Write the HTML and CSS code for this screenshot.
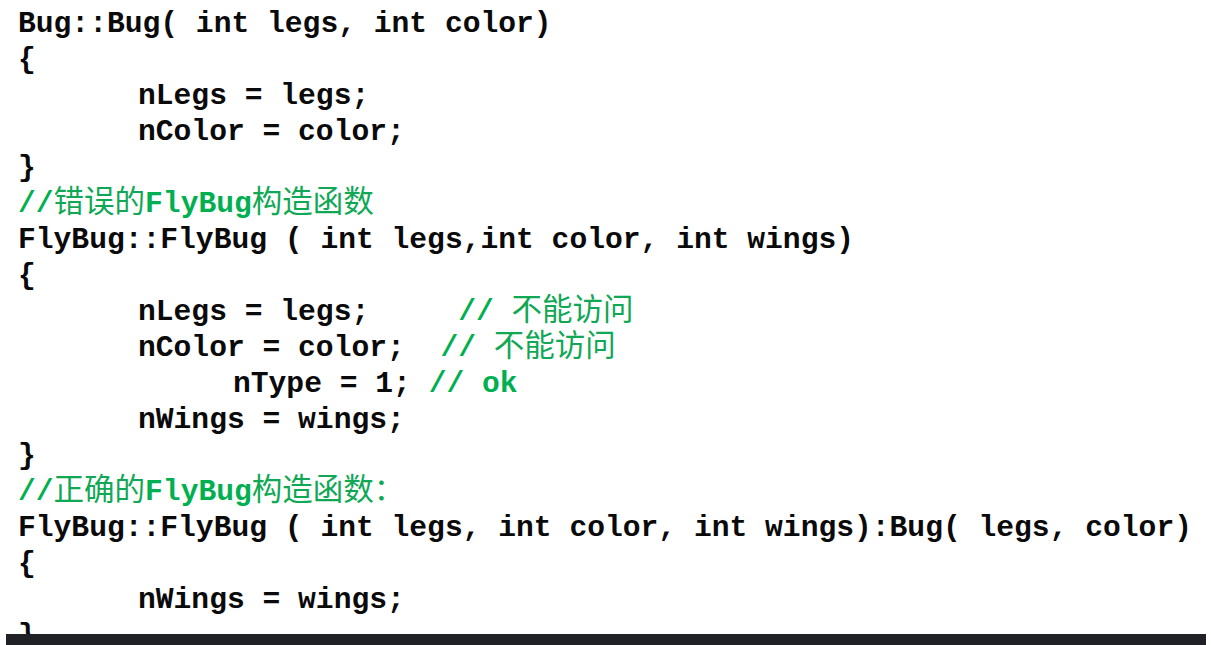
FILE: index.html
```html
<!DOCTYPE html>
<html lang="zh-CN">
<head>
    <meta charset="UTF-8">
    <meta name="viewport" content="width=device-width, initial-scale=1.0">
    <title>FlyBug 构造函数</title>
    <link rel="stylesheet" href="styles.css">
</head>
<body>

<div class="code">
    <div class="line">Bug::Bug( int legs, int color)</div>
    <div class="line">{</div>
    <div class="line in1">nLegs = legs;</div>
    <div class="line in1">nColor = color;</div>
    <div class="line">}</div>
    <div class="line comment">//<span class="cjk">错误的</span>FlyBug<span class="cjk">构造函数</span></div>
    <div class="line">FlyBug::FlyBug ( int legs,int color, int wings)</div>
    <div class="line">{</div>
    <div class="line in1">nLegs = legs;     <span class="comment">// <span class="cjk">不能访问</span></span></div>
    <div class="line in1">nColor = color;  <span class="comment">// <span class="cjk">不能访问</span></span></div>
    <div class="line in2">nType = 1; <span class="comment">// ok</span></div>
    <div class="line in1">nWings = wings;</div>
    <div class="line">}</div>
    <div class="line comment">//<span class="cjk">正确的</span>FlyBug<span class="cjk">构造函数：</span></div>
    <div class="line">FlyBug::FlyBug ( int legs, int color, int wings):Bug( legs, color)</div>
    <div class="line">{</div>
    <div class="line in1">nWings = wings;</div>
    <div class="line">}</div>
</div>

<div class="bottom-bar"></div>

</body>
</html>
```

FILE: styles.css
```css
body {
    margin: 0;
    background-color: #ffffff;
    overflow: hidden;
}
.code {
    padding: 6px 0 0 18px;
    font-family: "Liberation Mono", "Courier New", monospace;
    font-size: 29.65px;
    font-weight: bold;
    color: #0a0a0a;
}
.line {
    height: 36px;
    line-height: 36px;
    white-space: pre;
}
.in1 {
    padding-left: 120px;
}
.in2 {
    padding-left: 215px;
}
.comment {
    color: #00b050;
}
.cjk {
    font-family: "Noto Sans CJK SC", sans-serif;
    font-weight: normal;
    font-size: 30.5px;
    line-height: 0;
    color: #10a855;
}
.bottom-bar {
    position: fixed;
    left: 6px;
    right: 5px;
    bottom: 0;
    height: 11px;
    background-color: #202126;
}
```
